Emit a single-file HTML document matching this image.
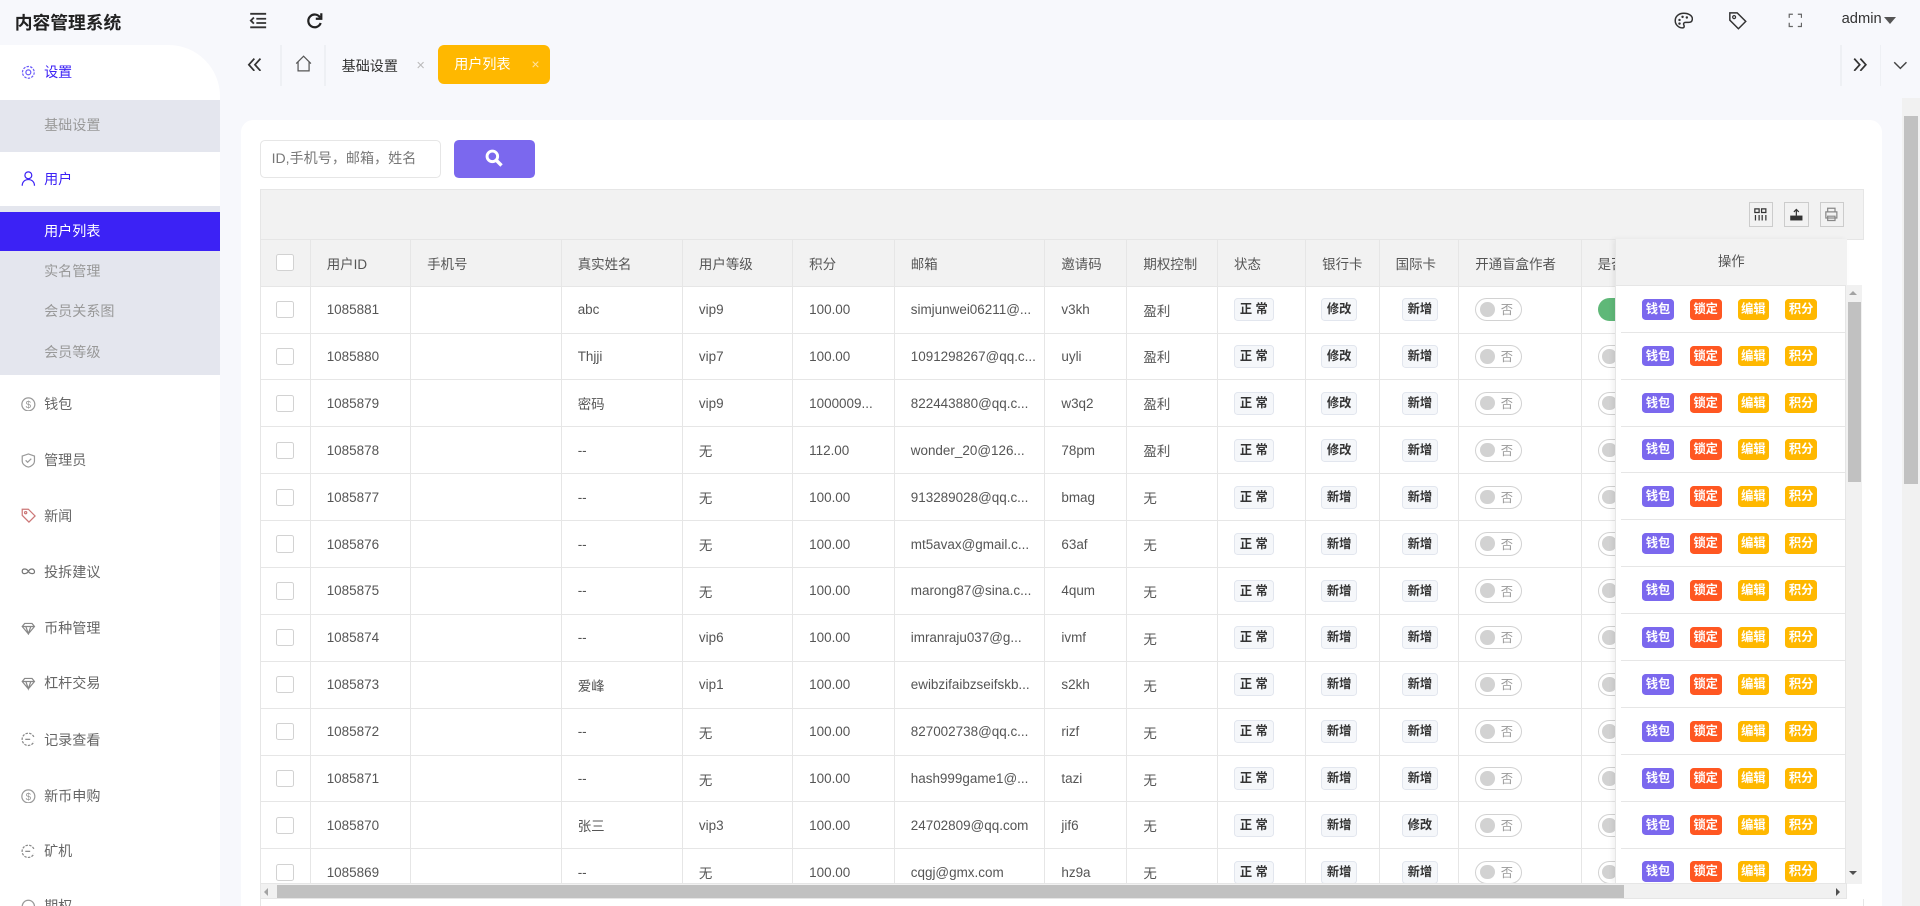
<!DOCTYPE html>
<html><head><meta charset="utf-8">
<style>
html{zoom:1.22449;overflow:hidden;height:740px}
*{margin:0;padding:0;box-sizing:border-box}
body{width:1568px;height:740px;overflow:hidden;background:#f7f8fc;font-family:"Liberation Sans","Noto Sans CJK SC",sans-serif;color:#555;font-size:11.5px;position:relative}
.a{position:absolute}
.title{left:12px;top:7px;font-size:14.5px;font-weight:bold;color:#222}
.side{left:0;top:37px;width:180px;height:703px;background:#fff;border-top-right-radius:42px;overflow:hidden}
.mi{position:absolute;left:0;width:180px;height:45px;line-height:45px;padding-left:36px;color:#666;font-size:11.5px}
.mi svg{position:absolute;left:17px;top:16px}
.sub{position:absolute;left:0;width:180px;height:33px;line-height:33px;padding-left:36px;color:#999;font-size:11.5px}
.tabtxt{font-size:11.5px;color:#333}
.card{left:197px;top:98px;width:1340px;height:642px;background:#fff;border-radius:10px 10px 0 0}
table{border-collapse:collapse;table-layout:fixed}
td,th{border:1px solid #e6e6e6;height:38.3px;padding:0 0 0 13px;text-align:left;font-weight:normal;white-space:nowrap;overflow:hidden;font-size:11px;color:#555}
th{background:#f2f2f2;color:#555}
.cb{width:14px;height:14px;border:1px solid #d2d2d2;background:#fff;display:inline-block;vertical-align:middle;border-radius:2px}
.bd{display:inline-block;border:1px solid #e2e6ee;background:#f5f7fa;border-radius:3px;padding:0 4px;font-size:10px;line-height:17px;color:#333;font-weight:bold}
.tg{display:inline-block;width:38px;height:19px;border:1px solid #d2d2d2;border-radius:10px;position:relative;vertical-align:middle}
.tg:before{content:"";position:absolute;left:3px;top:2.5px;width:12px;height:12px;border-radius:50%;background:#d2d2d2}
.tg span{position:absolute;left:20px;top:1px;font-size:10px;color:#999}
.ab{display:inline-block;width:26px;height:17px;line-height:17px;text-align:center;color:#fff;font-size:10px;font-weight:bold;border-radius:3px;margin-right:13px;vertical-align:middle}
.or{height:38.3px;line-height:37px;border-bottom:1px solid #e6e6e6;padding-left:17px;white-space:nowrap}
</style></head><body>
<div class="a title">内容管理系统</div>
<svg class="a" style="left:203px;top:10px" width="15" height="14" viewBox="0 0 15 14"><path d="M1 1.5h13M6 5.5h8M6 9h8M1 12.5h13M4 4.5L1.5 7 4 9.5" stroke="#333" stroke-width="1.5" fill="none"/></svg>
<svg class="a" style="left:250px;top:10px" width="14" height="14" viewBox="0 0 14 14"><path d="M11.5 4.5A5.2 5.2 0 1 0 12 9" stroke="#222" stroke-width="1.8" fill="none"/><path d="M12.5 1v4.5H8" stroke="#222" stroke-width="1.8" fill="none"/></svg>
<svg class="a" style="left:1367px;top:10px" width="16" height="14" viewBox="0 0 16 14"><path d="M8 1C4 1 1 3.5 1 7s3 6 6 6c1.5 0 1.5-1.5 1-2.5s0-2 1.5-2H12c2 0 3-1 3-3C15 3 12 1 8 1z" stroke="#333" stroke-width="1.2" fill="none"/><circle cx="4.5" cy="6.5" r="1" fill="#333"/><circle cx="7" cy="4" r="1" fill="#333"/><circle cx="10.5" cy="4.5" r="1" fill="#333"/><circle cx="4.5" cy="9.5" r="1" fill="#333"/></svg>
<svg class="a" style="left:1411px;top:9px" width="16" height="16" viewBox="0 0 16 16"><path d="M1.5 1.5h6l7 7-6 6-7-7z" stroke="#333" stroke-width="1.2" fill="none"/><circle cx="5" cy="5" r="1.2" stroke="#333" fill="none"/></svg>
<svg class="a" style="left:1460px;top:11px" width="12" height="12" viewBox="0 0 12 12"><path d="M1 4V1h3M8 1h3v3M11 8v3H8M4 11H1V8" stroke="#666" stroke-width="1" fill="none"/></svg>
<div class="a" style="left:1504px;top:9px;font-size:12px;color:#333">admin</div>
<div class="a" style="left:1539px;top:14px;border-left:5px solid transparent;border-right:5px solid transparent;border-top:6px solid #555"></div>

<div class="a side">
 <div class="mi" style="top:0;color:#3c22f5"><svg width="12" height="12" viewBox="0 0 12 12"><circle cx="6" cy="6" r="2" stroke="#6a5af9" fill="none"/><circle cx="6" cy="6" r="4.8" stroke="#6a5af9" stroke-dasharray="2 1" fill="none"/></svg>设置</div>
 <div class="sub" style="top:45px;height:42px;line-height:42px;background:#e4e6ee">基础设置</div>
 <div class="mi" style="top:87px;color:#3c22f5"><svg width="12" height="12" viewBox="0 0 12 12"><circle cx="6" cy="3.5" r="2.8" stroke="#3c22f5" fill="none"/><path d="M1 12c0-3 2-5 5-5s5 2 5 5" stroke="#3c22f5" fill="none"/></svg>用户</div>
 <div class="a" style="left:0;top:131px;width:180px;height:138px;background:#e4e6ee"></div>
 <div class="sub" style="top:136px;height:32px;line-height:32px;background:#3c22f5;color:#fff">用户列表</div>
 <div class="sub" style="top:168px">实名管理</div>
 <div class="sub" style="top:201px">会员关系图</div>
 <div class="sub" style="top:234px">会员等级</div>
 <div class="mi" style="top:271px"><svg width="12" height="12" viewBox="0 0 12 12"><circle cx="6" cy="6" r="5.3" stroke="#999" fill="none"/><text x="6" y="9" font-size="8" text-anchor="middle" fill="#999">$</text></svg>钱包</div>
 <div class="mi" style="top:317px"><svg width="12" height="12" viewBox="0 0 12 12"><path d="M6 .8L11 2.5v4C11 9 8.5 11 6 11.5 3.5 11 1 9 1 6.5v-4z" stroke="#999" fill="none"/><path d="M3.8 6l1.6 1.6L8.4 4.6" stroke="#999" fill="none"/></svg>管理员</div>
 <div class="mi" style="top:362px"><svg width="12" height="12" viewBox="0 0 12 12"><path d="M1 1h5l5.5 5.5-5 5L1 6z" stroke="#c77" fill="none"/><circle cx="3.8" cy="3.8" r=".9" stroke="#c77" fill="none"/></svg>新闻</div>
 <div class="mi" style="top:408px"><svg width="12" height="12" viewBox="0 0 12 12"><path d="M6 6C4.5 3.5 1 3.5 1 6s3.5 2.5 5 0 4.5-2.5 5 0-3.5 2.5-5 0" stroke="#777" fill="none"/></svg>投拆建议</div>
 <div class="mi" style="top:454px"><svg width="12" height="12" viewBox="0 0 12 12"><path d="M1 4.5L3 2h6l2 2.5L6 10.5zM1 4.5h10M4 4.5L6 10.5 8 4.5" stroke="#888" fill="none"/></svg>币种管理</div>
 <div class="mi" style="top:499px"><svg width="12" height="12" viewBox="0 0 12 12"><path d="M1 4.5L3 2h6l2 2.5L6 10.5zM1 4.5h10M4 4.5L6 10.5 8 4.5" stroke="#888" fill="none"/></svg>杠杆交易</div>
 <div class="mi" style="top:545px"><svg width="12" height="12" viewBox="0 0 12 12"><path d="M10.5 4A5 5 0 1 0 10.5 8" stroke="#888" stroke-dasharray="2 1" fill="none"/><path d="M3.5 6h4" stroke="#888"/></svg>记录查看</div>
 <div class="mi" style="top:591px"><svg width="12" height="12" viewBox="0 0 12 12"><circle cx="6" cy="6" r="5.3" stroke="#999" fill="none"/><text x="6" y="9" font-size="8" text-anchor="middle" fill="#999">$</text></svg>新币申购</div>
 <div class="mi" style="top:636px"><svg width="12" height="12" viewBox="0 0 12 12"><path d="M10.5 4A5 5 0 1 0 10.5 8" stroke="#888" stroke-dasharray="2 1" fill="none"/><path d="M3.5 6h4" stroke="#888"/></svg>矿机</div>
 <div class="mi" style="top:681px"><svg width="12" height="12" viewBox="0 0 12 12"><circle cx="6" cy="6" r="5" stroke="#999" fill="none"/></svg>期权</div>
</div>

<svg class="a" style="left:202px;top:47px" width="12" height="11" viewBox="0 0 12 11"><path d="M6 .5L1.5 5.5 6 10.5M11 .5L6.5 5.5 11 10.5" stroke="#333" stroke-width="1.4" fill="none"/></svg>
<div class="a" style="left:229px;top:37px;width:1px;height:33px;background:#eef0f4"></div>
<svg class="a" style="left:241px;top:45px" width="14" height="14" viewBox="0 0 14 14"><path d="M1 7L7 1l6 6M2.5 5.5V13h9V5.5" stroke="#555" stroke-width="1" fill="none"/></svg>
<div class="a" style="left:265px;top:37px;width:1px;height:33px;background:#eef0f4"></div>
<div class="a tabtxt" style="left:279px;top:46px">基础设置</div>
<div class="a" style="left:340px;top:47px;color:#bbb;font-size:12px">×</div>
<div class="a" style="left:358px;top:37px;width:91px;height:32px;background:#ffb800;border-radius:5px;color:#fff;font-size:11.5px;line-height:32px;padding-left:13px">用户列表<span style="margin-left:17px;color:#ffe2a0">×</span></div>
<div class="a" style="left:1503px;top:37px;width:1px;height:33px;background:#eef0f4"></div>
<svg class="a" style="left:1513px;top:47px" width="12" height="11" viewBox="0 0 12 11"><path d="M1 .5l4.5 5-4.5 5M6 .5l4.5 5-4.5 5" stroke="#333" stroke-width="1.4" fill="none"/></svg>
<div class="a" style="left:1535px;top:37px;width:1px;height:33px;background:#eef0f4"></div>
<svg class="a" style="left:1546px;top:50px" width="12" height="7" viewBox="0 0 12 7"><path d="M1 1l5 5 5-5" stroke="#444" stroke-width="1.2" fill="none"/></svg>

<div class="a" style="left:1553px;top:80px;width:15px;height:660px;background:#f1f1f1"></div>
<div class="a" style="left:1555px;top:95px;width:11px;height:300px;background:#c1c1c1"></div>

<div class="a card"></div>
<div class="a" style="left:212px;top:114px;width:148px;height:31px;border:1px solid #e6e6e6;border-radius:4px;background:#fff;padding-left:9px;line-height:29px;color:#777;font-size:11.5px">ID,手机号，邮箱，姓名</div>
<div class="a" style="left:371px;top:114px;width:66px;height:31px;background:#7b68ee;border-radius:4px"></div>
<svg class="a" style="left:396px;top:122px" width="15" height="15" viewBox="0 0 15 15"><circle cx="6" cy="6" r="4.3" stroke="#fff" stroke-width="2.4" fill="none"/><path d="M9 9l4.5 4.5" stroke="#fff" stroke-width="2.8"/></svg>

<div class="a" style="left:212px;top:154px;width:1310px;height:42px;background:#f2f2f2;border:1px solid #e6e6e6"></div>
<div class="a" style="left:1428px;top:165px;width:20px;height:20px;border:1px solid #ccc"></div>
<svg class="a" style="left:1432px;top:169px" width="12" height="12" viewBox="0 0 12 12"><path d="M1.5 1.5h3.5v3H1.5zM7 1.5h3.5v3H7zM2 6.5V11M5 6.5V11M7.5 6.5V11M10.5 6.5V11" stroke="#333" fill="none"/></svg>
<div class="a" style="left:1457px;top:165px;width:20px;height:20px;border:1px solid #ccc"></div>
<svg class="a" style="left:1461px;top:169px" width="12" height="12" viewBox="0 0 12 12"><path d="M1 7h10v4H1z" fill="#333"/><path d="M6 7V2M4 4l2-2 2 2" stroke="#333" fill="none"/></svg>
<div class="a" style="left:1486px;top:165px;width:20px;height:20px;border:1px solid #ccc"></div>
<svg class="a" style="left:1490px;top:169px" width="12" height="12" viewBox="0 0 12 12"><path d="M3 4V1h6v3M1.5 4h9v5h-9zM3 7.5h6V11H3z" stroke="#888" fill="none"/></svg>

<div class="a" style="left:212px;top:195px;width:1296px;height:527px;overflow:hidden">
<table style="width:1340px">
<colgroup><col style="width:41px"><col style="width:82px"><col style="width:123px"><col style="width:99px"><col style="width:90px"><col style="width:83px"><col style="width:123px"><col style="width:67px"><col style="width:74px"><col style="width:72px"><col style="width:60px"><col style="width:65px"><col style="width:100px"><col style="width:261px"></colgroup>
<tr><th style="padding-left:13px"><span class="cb"></span></th><th>用户ID</th><th>手机号</th><th>真实姓名</th><th>用户等级</th><th>积分</th><th>邮箱</th><th>邀请码</th><th>期权控制</th><th>状态</th><th>银行卡</th><th>国际卡</th><th>开通盲盒作者</th><th>是否</th></tr>
<tr><td><span class="cb"></span></td><td>1085881</td><td></td><td>abc</td><td>vip9</td><td>100.00</td><td>simjunwei06211@...</td><td>v3kh</td><td>盈利</td><td><span class="bd">正 常</span></td><td style="padding-left:12px"><span class="bd">修改</span></td><td style="padding-left:18px"><span class="bd">新增</span></td><td><span class="tg"><span>否</span></span></td><td><span style="display:inline-block;width:38px;height:19px;border-radius:10px;background:#5fb878;vertical-align:middle"></span></td></tr>
<tr><td><span class="cb"></span></td><td>1085880</td><td></td><td>Thjji</td><td>vip7</td><td>100.00</td><td>1091298267@qq.c...</td><td>uyli</td><td>盈利</td><td><span class="bd">正 常</span></td><td style="padding-left:12px"><span class="bd">修改</span></td><td style="padding-left:18px"><span class="bd">新增</span></td><td><span class="tg"><span>否</span></span></td><td><span class="tg"></span></td></tr>
<tr><td><span class="cb"></span></td><td>1085879</td><td></td><td>密码</td><td>vip9</td><td>1000009...</td><td>822443880@qq.c...</td><td>w3q2</td><td>盈利</td><td><span class="bd">正 常</span></td><td style="padding-left:12px"><span class="bd">修改</span></td><td style="padding-left:18px"><span class="bd">新增</span></td><td><span class="tg"><span>否</span></span></td><td><span class="tg"></span></td></tr>
<tr><td><span class="cb"></span></td><td>1085878</td><td></td><td>--</td><td>无</td><td>112.00</td><td>wonder_20@126...</td><td>78pm</td><td>盈利</td><td><span class="bd">正 常</span></td><td style="padding-left:12px"><span class="bd">修改</span></td><td style="padding-left:18px"><span class="bd">新增</span></td><td><span class="tg"><span>否</span></span></td><td><span class="tg"></span></td></tr>
<tr><td><span class="cb"></span></td><td>1085877</td><td></td><td>--</td><td>无</td><td>100.00</td><td>913289028@qq.c...</td><td>bmag</td><td>无</td><td><span class="bd">正 常</span></td><td style="padding-left:12px"><span class="bd">新增</span></td><td style="padding-left:18px"><span class="bd">新增</span></td><td><span class="tg"><span>否</span></span></td><td><span class="tg"></span></td></tr>
<tr><td><span class="cb"></span></td><td>1085876</td><td></td><td>--</td><td>无</td><td>100.00</td><td>mt5avax@gmail.c...</td><td>63af</td><td>无</td><td><span class="bd">正 常</span></td><td style="padding-left:12px"><span class="bd">新增</span></td><td style="padding-left:18px"><span class="bd">新增</span></td><td><span class="tg"><span>否</span></span></td><td><span class="tg"></span></td></tr>
<tr><td><span class="cb"></span></td><td>1085875</td><td></td><td>--</td><td>无</td><td>100.00</td><td>marong87@sina.c...</td><td>4qum</td><td>无</td><td><span class="bd">正 常</span></td><td style="padding-left:12px"><span class="bd">新增</span></td><td style="padding-left:18px"><span class="bd">新增</span></td><td><span class="tg"><span>否</span></span></td><td><span class="tg"></span></td></tr>
<tr><td><span class="cb"></span></td><td>1085874</td><td></td><td>--</td><td>vip6</td><td>100.00</td><td>imranraju037@g...</td><td>ivmf</td><td>无</td><td><span class="bd">正 常</span></td><td style="padding-left:12px"><span class="bd">新增</span></td><td style="padding-left:18px"><span class="bd">新增</span></td><td><span class="tg"><span>否</span></span></td><td><span class="tg"></span></td></tr>
<tr><td><span class="cb"></span></td><td>1085873</td><td></td><td>爱峰</td><td>vip1</td><td>100.00</td><td>ewibzifaibzseifskb...</td><td>s2kh</td><td>无</td><td><span class="bd">正 常</span></td><td style="padding-left:12px"><span class="bd">新增</span></td><td style="padding-left:18px"><span class="bd">新增</span></td><td><span class="tg"><span>否</span></span></td><td><span class="tg"></span></td></tr>
<tr><td><span class="cb"></span></td><td>1085872</td><td></td><td>--</td><td>无</td><td>100.00</td><td>827002738@qq.c...</td><td>rizf</td><td>无</td><td><span class="bd">正 常</span></td><td style="padding-left:12px"><span class="bd">新增</span></td><td style="padding-left:18px"><span class="bd">新增</span></td><td><span class="tg"><span>否</span></span></td><td><span class="tg"></span></td></tr>
<tr><td><span class="cb"></span></td><td>1085871</td><td></td><td>--</td><td>无</td><td>100.00</td><td>hash999game1@...</td><td>tazi</td><td>无</td><td><span class="bd">正 常</span></td><td style="padding-left:12px"><span class="bd">新增</span></td><td style="padding-left:18px"><span class="bd">新增</span></td><td><span class="tg"><span>否</span></span></td><td><span class="tg"></span></td></tr>
<tr><td><span class="cb"></span></td><td>1085870</td><td></td><td>张三</td><td>vip3</td><td>100.00</td><td>24702809@qq.com</td><td>jif6</td><td>无</td><td><span class="bd">正 常</span></td><td style="padding-left:12px"><span class="bd">新增</span></td><td style="padding-left:18px"><span class="bd">修改</span></td><td><span class="tg"><span>否</span></span></td><td><span class="tg"></span></td></tr>
<tr><td><span class="cb"></span></td><td>1085869</td><td></td><td>--</td><td>无</td><td>100.00</td><td>cqgj@gmx.com</td><td>hz9a</td><td>无</td><td><span class="bd">正 常</span></td><td style="padding-left:12px"><span class="bd">新增</span></td><td style="padding-left:18px"><span class="bd">新增</span></td><td><span class="tg"><span>否</span></span></td><td><span class="tg"></span></td></tr>
</table>
</div>

<div class="a" style="left:1319px;top:195px;width:189px;height:527px;background:#fff;border-left:1px solid #e6e6e6;box-shadow:-2px 0 4px rgba(0,0,0,.06);overflow:hidden">
 <div style="height:38.5px;background:#f2f2f2;border-bottom:1px solid #e6e6e6;text-align:center;line-height:38px;font-size:11px;color:#555">操作</div>
</div>
<div class="a" style="left:1324px;top:233.5px;width:184px;height:488px;overflow:hidden">
<div class="or"><span class="ab" style="background:#7b68ee">钱包</span><span class="ab" style="background:#ff5722">锁定</span><span class="ab" style="background:#ffb800">编辑</span><span class="ab" style="background:#ffb800">积分</span></div>
<div class="or"><span class="ab" style="background:#7b68ee">钱包</span><span class="ab" style="background:#ff5722">锁定</span><span class="ab" style="background:#ffb800">编辑</span><span class="ab" style="background:#ffb800">积分</span></div>
<div class="or"><span class="ab" style="background:#7b68ee">钱包</span><span class="ab" style="background:#ff5722">锁定</span><span class="ab" style="background:#ffb800">编辑</span><span class="ab" style="background:#ffb800">积分</span></div>
<div class="or"><span class="ab" style="background:#7b68ee">钱包</span><span class="ab" style="background:#ff5722">锁定</span><span class="ab" style="background:#ffb800">编辑</span><span class="ab" style="background:#ffb800">积分</span></div>
<div class="or"><span class="ab" style="background:#7b68ee">钱包</span><span class="ab" style="background:#ff5722">锁定</span><span class="ab" style="background:#ffb800">编辑</span><span class="ab" style="background:#ffb800">积分</span></div>
<div class="or"><span class="ab" style="background:#7b68ee">钱包</span><span class="ab" style="background:#ff5722">锁定</span><span class="ab" style="background:#ffb800">编辑</span><span class="ab" style="background:#ffb800">积分</span></div>
<div class="or"><span class="ab" style="background:#7b68ee">钱包</span><span class="ab" style="background:#ff5722">锁定</span><span class="ab" style="background:#ffb800">编辑</span><span class="ab" style="background:#ffb800">积分</span></div>
<div class="or"><span class="ab" style="background:#7b68ee">钱包</span><span class="ab" style="background:#ff5722">锁定</span><span class="ab" style="background:#ffb800">编辑</span><span class="ab" style="background:#ffb800">积分</span></div>
<div class="or"><span class="ab" style="background:#7b68ee">钱包</span><span class="ab" style="background:#ff5722">锁定</span><span class="ab" style="background:#ffb800">编辑</span><span class="ab" style="background:#ffb800">积分</span></div>
<div class="or"><span class="ab" style="background:#7b68ee">钱包</span><span class="ab" style="background:#ff5722">锁定</span><span class="ab" style="background:#ffb800">编辑</span><span class="ab" style="background:#ffb800">积分</span></div>
<div class="or"><span class="ab" style="background:#7b68ee">钱包</span><span class="ab" style="background:#ff5722">锁定</span><span class="ab" style="background:#ffb800">编辑</span><span class="ab" style="background:#ffb800">积分</span></div>
<div class="or"><span class="ab" style="background:#7b68ee">钱包</span><span class="ab" style="background:#ff5722">锁定</span><span class="ab" style="background:#ffb800">编辑</span><span class="ab" style="background:#ffb800">积分</span></div>
<div class="or"><span class="ab" style="background:#7b68ee">钱包</span><span class="ab" style="background:#ff5722">锁定</span><span class="ab" style="background:#ffb800">编辑</span><span class="ab" style="background:#ffb800">积分</span></div>
</div>

<div class="a" style="left:1507px;top:233px;width:14px;height:489px;background:#f1f1f1;border-left:1px solid #e6e6e6"></div>
<div class="a" style="left:1510px;top:238px;border-left:3.5px solid transparent;border-right:3.5px solid transparent;border-bottom:4px solid #a3a3a3"></div>
<div class="a" style="left:1509px;top:247px;width:11px;height:147px;background:#c1c1c1"></div>
<div class="a" style="left:1510px;top:711px;border-left:3.5px solid transparent;border-right:3.5px solid transparent;border-top:4px solid #505050"></div>
<div class="a" style="left:212px;top:721px;width:1296px;height:13px;background:#f1f1f1;border:1px solid #e6e6e6"></div>
<div class="a" style="left:216px;top:725px;border-top:3.5px solid transparent;border-bottom:3.5px solid transparent;border-right:4px solid #a3a3a3"></div>
<div class="a" style="left:226px;top:723px;width:1100px;height:10px;background:#c1c1c1"></div>
<div class="a" style="left:1499px;top:725px;border-top:3.5px solid transparent;border-bottom:3.5px solid transparent;border-left:4px solid #505050"></div>
<div class="a" style="left:212px;top:734px;width:1310px;height:6px;border-left:1px solid #e6e6e6;border-right:1px solid #e6e6e6"></div>
</body></html>
